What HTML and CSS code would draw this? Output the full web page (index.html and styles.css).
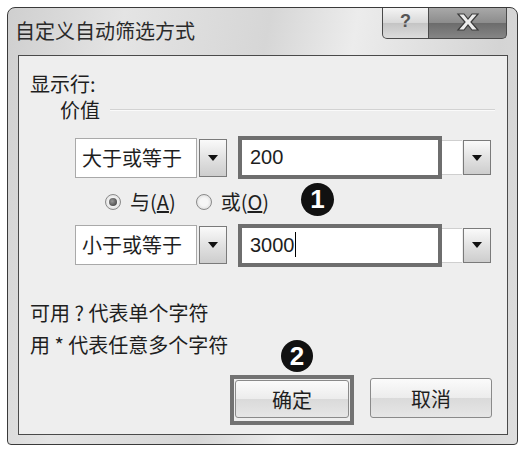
FILE: index.html
```html
<!DOCTYPE html>
<html lang="zh-CN">
<head>
    <meta charset="UTF-8">
    <meta name="viewport" content="width=device-width, initial-scale=1.0">
    <title>自定义自动筛选方式</title>
    <link rel="stylesheet" href="styles.css">
</head>
<body>
    <div class="window">
        <div class="titlebar">
            <span class="title">自定义自动筛选方式</span>
            <div class="caption-buttons">
                <button class="cap-btn help">?</button>
                <button class="cap-btn close">
                    <svg width="26" height="18" viewBox="0 0 26 18">
                        <path d="M3 1 H9 L13 6 L17 1 H23 L16 9 L23 17 H17 L13 12 L9 17 H3 L10 9 Z" fill="#ececec" stroke="#3a3a3a" stroke-width="1.2"/>
                    </svg>
                </button>
            </div>
        </div>

        <div class="client">
            <div class="show-label">显示行:</div>
            <div class="group-title">
                <span>价值</span>
                <span class="group-line"></span>
            </div>

            <div class="rows">
                <div class="cond-row first">
                    <div class="combo">大于或等于</div>
                    <div class="drop"><span class="arrow"></span></div>
                    <div class="value-field">
                        <div class="value-box">200</div>
                        <div class="value-ext"></div>
                        <div class="drop small"><span class="arrow"></span></div>
                    </div>
                </div>

                <div class="radio-row">
                    <span class="radio checked"></span>
                    <span class="radio-label">与(<u>A</u>)</span>
                    <span class="radio"></span>
                    <span class="radio-label">或(<u>O</u>)</span>
                </div>

                <div class="cond-row second">
                    <div class="combo">小于或等于</div>
                    <div class="drop"><span class="arrow"></span></div>
                    <div class="value-field">
                        <div class="value-box">3000<span class="caret"></span></div>
                        <div class="value-ext"></div>
                        <div class="drop small"><span class="arrow"></span></div>
                    </div>
                </div>
            </div>

            <div class="hints">
                <p>可用 ? 代表单个字符</p>
                <p>用 * 代表任意多个字符</p>
            </div>

            <div class="actions">
                <div class="ok-frame"><button class="btn">确定</button></div>
                <button class="btn cancel">取消</button>
            </div>

            <!-- 步骤编号 -->
            <span class="badge badge-1">1</span>
            <span class="badge badge-2">2</span>
        </div>
    </div>
</body>
</html>
```

FILE: styles.css
```css
body {
    margin: 0;
    padding: 0;
    background-color: #fff;
    font-family: "Noto Sans CJK SC", "Liberation Sans", sans-serif;
    color: #1e1e1e;
}

.window {
    margin: 7px 0 0 7px;
    width: 509px;
    height: 436px;
    border: 1px solid #3a3a3a;
    border-radius: 8px 8px 4px 4px;
    background: linear-gradient(100deg, #cfcfcf 0%, #e4e4e4 20%, #d6d6d6 45%, #ececec 60%, #d4d4d4 85%, #dedede 100%);
    display: flex;
    flex-direction: column;
}

.titlebar {
    height: 47px;
    display: flex;
    justify-content: space-between;
    align-items: flex-start;
}

.title {
    margin: 9px 0 0 7px;
    font-size: 20px;
    line-height: 28px;
    color: #2a2a2a;
}

.caption-buttons {
    display: flex;
    margin-right: 10px;
}

.cap-btn {
    height: 31px;
    border: 1px solid #4a4a4a;
    border-top: none;
    padding: 0;
    margin: 0;
    display: flex;
    align-items: center;
    justify-content: center;
}

.help {
    width: 47px;
    border-radius: 0 0 0 5px;
    background: linear-gradient(#f4f4f4, #d8d8d8 50%, #c4c4c4 51%, #dcdcdc);
    font-family: "Liberation Sans", sans-serif;
    font-weight: bold;
    font-size: 18px;
    color: #555;
    padding-bottom: 4px;
}

.close {
    width: 78px;
    border-left: none;
    border-radius: 0 0 5px 0;
    background: linear-gradient(#a8a8a8, #8c8c8c 50%, #6c6c6c 51%, #858585);
    padding-bottom: 3px;
}

.client {
    position: relative;
    margin: 0 9px 9px 10px;
    flex: 1;
    border: 1px solid #4a4a4a;
    background-color: #eeeeee;
    padding: 15px 10px 0 11px;
    font-size: 20px;
}

.show-label {
    line-height: 26px;
}

.group-title {
    display: flex;
    align-items: center;
    margin: 0 2px 0 30px;
    line-height: 26px;
}

.group-line {
    flex: 1;
    margin-left: 10px;
    border-top: 1px solid #d2d2d2;
    border-bottom: 1px solid #fafafa;
}

.rows {
    margin-left: 45px;
}

.cond-row {
    display: flex;
    align-items: center;
    height: 43px;
}

.cond-row.first {
    margin-top: 13px;
}

.cond-row.second {
    margin-top: 8px;
    height: 44px;
}

.combo {
    width: 114px;
    height: 38px;
    line-height: 38px;
    padding-left: 6px;
    background-color: #fff;
    border: 1px solid #a9a9a9;
}

.drop {
    width: 26px;
    height: 36px;
    margin-left: 2px;
    border: 1px solid #7a7a7a;
    background: linear-gradient(#fafafa, #e2e2e2 50%, #cdcdcd);
    display: flex;
    align-items: center;
    justify-content: center;
}

.drop.small {
    height: 33px;
    margin-left: 1px;
}

.arrow {
    width: 0;
    height: 0;
    border-left: 5px solid transparent;
    border-right: 5px solid transparent;
    border-top: 6px solid #111;
}

.value-field {
    display: flex;
    align-items: center;
    margin-left: 11px;
}

.value-box {
    width: 188px;
    height: 35px;
    line-height: 35px;
    padding-left: 8px;
    border: 4px solid #6e6e6e;
    background-color: #fff;
    font-family: "Liberation Sans", sans-serif;
    font-size: 20px;
}

.caret {
    display: inline-block;
    width: 1px;
    height: 25px;
    background-color: #000;
    vertical-align: -5px;
}

.value-ext {
    width: 20px;
    height: 33px;
    background-color: #fff;
    border-top: 1px solid #cfcfcf;
    border-bottom: 1px solid #cfcfcf;
}

.radio-row {
    display: flex;
    align-items: center;
    height: 26px;
    margin-top: 10px;
    padding-left: 30px;
}

.radio {
    width: 14px;
    height: 14px;
    border-radius: 50%;
    border: 1px solid #8a8a8a;
    background: radial-gradient(circle, #f6f6f6 40%, #d0d0d0);
    position: relative;
}

.radio.checked::after {
    content: "";
    position: absolute;
    left: 3px;
    top: 3px;
    width: 8px;
    height: 8px;
    border-radius: 50%;
    background: radial-gradient(circle at 40% 40%, #9a9a9a, #333);
}

.radio-label {
    margin: 0 20px 0 9px;
    line-height: 26px;
}

.hints {
    margin-top: 30px;
}

.hints p {
    margin: 0;
    line-height: 32px;
}

.actions {
    display: flex;
    justify-content: flex-end;
    align-items: flex-start;
    margin: 14px 5px 0 0;
}

.ok-frame {
    border: 4px solid #727272;
    width: 116px;
    height: 42px;
    display: flex;
}

.btn {
    font-family: "Noto Sans CJK SC", sans-serif;
    font-size: 20px;
    color: #1e1e1e;
    border: 1px solid #8a8a8a;
    border-radius: 3px;
    background: linear-gradient(#fbfbfb, #ececec 50%, #dadada 51%, #e6e6e6);
    padding: 0;
}

.ok-frame .btn {
    flex: 1;
    margin: 1px 1px 3px 1px;
}

.cancel {
    width: 122px;
    height: 40px;
    margin: 3px 0 0 16px;
}

.badge {
    position: absolute;
    width: 33px;
    height: 33px;
    border-radius: 50%;
    background-color: #111;
    color: #fff;
    font-family: "Liberation Sans", sans-serif;
    font-weight: bold;
    font-size: 26px;
    line-height: 33px;
    text-align: center;
}

.badge-1 {
    left: 282px;
    top: 127px;
}

.badge-2 {
    left: 262px;
    top: 284px;
    width: 32px;
    height: 32px;
    line-height: 32px;
}
```
